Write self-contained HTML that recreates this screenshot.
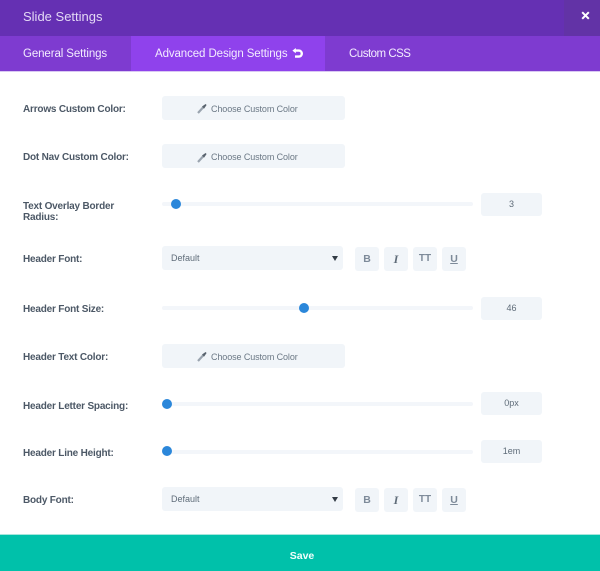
<!DOCTYPE html>
<html><head><meta charset="utf-8">
<style>
html,body{margin:0;padding:0;background:#fff}
#p{position:relative;width:600px;height:571px;overflow:hidden;background:#fff;font-family:"Liberation Sans",sans-serif;filter:blur(.3px)}
#p div,#p svg{position:absolute}
.t{white-space:nowrap;line-height:14px}
.l{left:23px;font-size:10px;font-weight:bold;color:#4c5866;letter-spacing:-.2px}
.b{background:#f1f5f9;border-radius:3px}
.c{left:162px;width:183px;height:24px}
.ct{left:211px;font-size:9px;color:#6b7885;letter-spacing:-.1px}
.tr{left:162px;width:311px;height:4px;background:#f3f6fa;border-radius:2px}
.k{width:10px;height:10px;border-radius:50%;background:#2b87da}
.n{left:481px;width:61px;height:23px;font-size:9px;color:#5f6c79;text-align:center;line-height:23px}
.s{left:162px;width:181px;height:24px}
.st{left:171px;font-size:9px;color:#5f6c79}
.a{left:332px;width:0;height:0;border-left:3px solid transparent;border-right:3px solid transparent;border-top:5px solid #333c46}
.f{width:24px;height:24px;font-size:10.5px;font-weight:bold;color:#7d8a99;text-align:center;line-height:24px}
.tab{color:#f3ecff;font-size:11.5px;letter-spacing:-.1px}
</style></head><body>
<div id="p">
<div style="left:0;top:0;width:600px;height:36px;background:#6530b3"></div>
<div style="left:564px;top:0;width:36px;height:36px;background:#6233a6"></div>
<div class="t" style="left:23px;top:10px;font-size:13px;color:#e3d8f5">Slide Settings</div>
<svg style="left:581px;top:11px" width="9" height="9" viewBox="0 0 9 9"><path d="M1.2 1.2L7.8 7.8M7.8 1.2L1.2 7.8" stroke="#fff" stroke-width="2"/></svg>
<div style="left:0;top:36px;width:600px;height:35px;background:#7e3bd0"></div>
<div style="left:131px;top:36px;width:194px;height:35px;background:#8f42ec"></div>
<div style="left:0;top:71px;width:600px;height:1px;background:#d9c8f3"></div>
<div class="t tab" style="left:23px;top:47px">General Settings</div>
<div class="t tab" style="left:155px;top:47px">Advanced Design Settings</div>
<svg style="left:292px;top:48px" width="11" height="11" viewBox="0 0 11 11"><path d="M3 2.6H6.8A2.9 2.9 0 0 1 6.8 8.6H3" fill="none" stroke="#fff" stroke-width="2.4"/><path d="M0.4 2.6L3.8 0V5.2Z" fill="#fff"/></svg>
<div class="t tab" style="left:349px;top:47px;letter-spacing:-.5px">Custom CSS</div>

<div class="t l" style="top:103px">Arrows Custom Color:</div>
<div class="b c" style="top:96px"></div>
<svg style="left:197px;top:103px" width="10" height="11" viewBox="0 0 10 11"><path d="M1 10L6 4.5" stroke="#9aa4af" stroke-width="2.2"/><path d="M5 3.5L8.6 1L9.6 2L7 5.8Z" fill="#59636e"/></svg>
<div class="t ct" style="top:102px">Choose Custom Color</div>

<div class="t l" style="top:151px">Dot Nav Custom Color:</div>
<div class="b c" style="top:144px"></div>
<svg style="left:197px;top:152px" width="10" height="11" viewBox="0 0 10 11"><path d="M1 10L6 4.5" stroke="#9aa4af" stroke-width="2.2"/><path d="M5 3.5L8.6 1L9.6 2L7 5.8Z" fill="#59636e"/></svg>
<div class="t ct" style="top:150px">Choose Custom Color</div>

<div class="t l" style="top:201px;line-height:11px">Text Overlay Border<br>Radius:</div>
<div class="tr" style="top:202px"></div>
<div class="k" style="left:171px;top:199px"></div>
<div class="b n" style="top:193px">3</div>

<div class="t l" style="top:253px">Header Font:</div>
<div class="b s" style="top:246px"></div>
<div class="t st" style="top:251px">Default</div>
<div class="a" style="top:256px"></div>
<div class="b f" style="left:355px;top:247px">B</div>
<div class="b f" style="left:384px;top:247px;font-style:italic;font-family:'Liberation Serif',serif;font-size:12px;color:#5f6c79">I</div>
<div class="b f" style="left:413px;top:247px;font-size:10px">TT</div>
<div class="b f" style="left:442px;top:247px;text-decoration:underline">U</div>

<div class="t l" style="top:303px">Header Font Size:</div>
<div class="tr" style="top:306px"></div>
<div class="k" style="left:299px;top:303px"></div>
<div class="b n" style="top:297px">46</div>

<div class="t l" style="top:351px">Header Text Color:</div>
<div class="b c" style="top:344px"></div>
<svg style="left:197px;top:351px" width="10" height="11" viewBox="0 0 10 11"><path d="M1 10L6 4.5" stroke="#9aa4af" stroke-width="2.2"/><path d="M5 3.5L8.6 1L9.6 2L7 5.8Z" fill="#59636e"/></svg>
<div class="t ct" style="top:350px">Choose Custom Color</div>

<div class="t l" style="top:400px">Header Letter Spacing:</div>
<div class="tr" style="top:402px"></div>
<div class="k" style="left:162px;top:399px"></div>
<div class="b n" style="top:392px">0px</div>

<div class="t l" style="top:447px">Header Line Height:</div>
<div class="tr" style="top:450px"></div>
<div class="k" style="left:162px;top:446px"></div>
<div class="b n" style="top:440px">1em</div>

<div class="t l" style="top:494px">Body Font:</div>
<div class="b s" style="top:487px"></div>
<div class="t st" style="top:492px">Default</div>
<div class="a" style="top:497px"></div>
<div class="b f" style="left:355px;top:488px">B</div>
<div class="b f" style="left:384px;top:488px;font-style:italic;font-family:'Liberation Serif',serif;font-size:12px;color:#5f6c79">I</div>
<div class="b f" style="left:413px;top:488px;font-size:10px">TT</div>
<div class="b f" style="left:442px;top:488px;text-decoration:underline">U</div>

<div style="left:0;top:534px;width:600px;height:1px;background:#a5e6dc"></div>
<div style="left:0;top:535px;width:600px;height:36px;background:#00c1aa"></div>
<div class="t" style="left:0;width:604px;text-align:center;top:549px;font-size:10.5px;font-weight:bold;color:#f2fffc">Save</div>
</div>
</body></html>
